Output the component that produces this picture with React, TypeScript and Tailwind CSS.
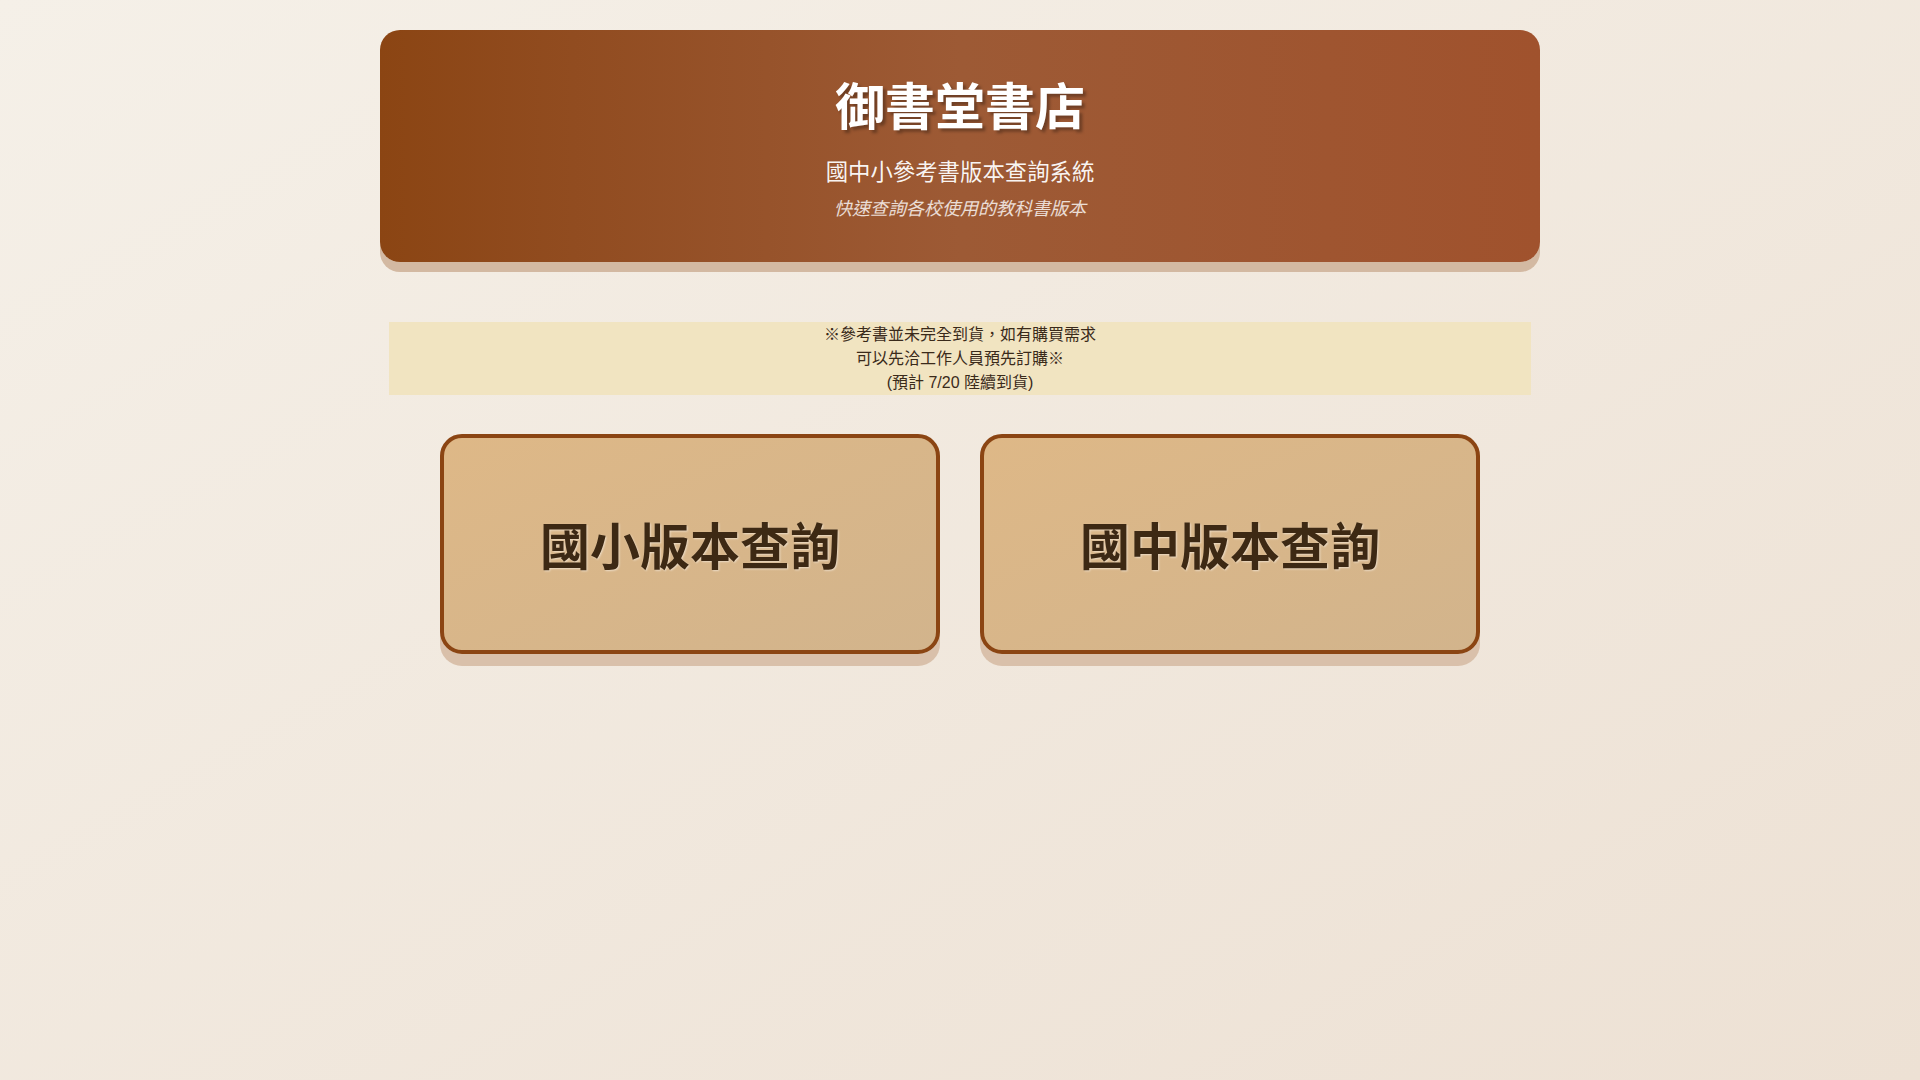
export default function App() {
  const font = { fontFamily: '"Liberation Sans", "Noto Sans CJK TC", sans-serif' }

  return (
    <div
      className="min-h-screen w-full bg-gradient-to-br from-[#f5f0e8] to-[#ede1d4] text-[#3d2b1a]"
      style={font}
    >
      <div className="mx-auto max-w-[1200px] px-5 pt-[30px]">
        {/* Header */}
        <header className="rounded-[20px] bg-gradient-to-r from-[#8B4513] via-[#9d5a35] to-[#A0522D] pt-[48px] pb-[39px] text-center text-white shadow-[0_10px_0_#d3b9a2]">
          <h1 className="text-[50px] font-bold leading-[1.2] [text-shadow:3px_3px_3px_rgba(0,0,0,0.3)]">
            御書堂書店
          </h1>
          <p className="mt-[18px] text-[22.4px] leading-[1.5] text-white/95">國中小參考書版本查詢系統</p>
          <p className="mt-[6px] text-[18px] italic leading-[1.5] text-white/80">快速查詢各校使用的教科書版本</p>
        </header>

        {/* Notice */}
        <div className="mx-[9px] mt-[60px] bg-[#f1e4c1] pt-[1px] text-center text-[16px] leading-[24px] text-[#3a2a1a]">
          <p>※參考書並未完全到貨，如有購買需求</p>
          <p>可以先洽工作人員預先訂購※</p>
          <p className="-mb-[1px]">(預計 7/20 陸續到貨)</p>
        </div>

        {/* Buttons */}
        <div className="mx-auto mt-[40px] grid max-w-[1040px] grid-cols-2 gap-[40px]">
          {['國小版本查詢', '國中版本查詢'].map((label) => (
            <button
              key={label}
              className="flex h-[220px] items-center justify-center rounded-[22px] border-4 border-[#8B4513] bg-gradient-to-br from-[#deb887] to-[#d2b48c] pt-[10px] shadow-[0_12px_0_#d9c0aa]"
              style={font}
            >
              <span className="text-[50px] font-bold text-[#3d2914] [text-shadow:1px_1px_2px_rgba(255,255,255,0.5)]">
                {label}
              </span>
            </button>
          ))}
        </div>
      </div>
    </div>
  )
}
